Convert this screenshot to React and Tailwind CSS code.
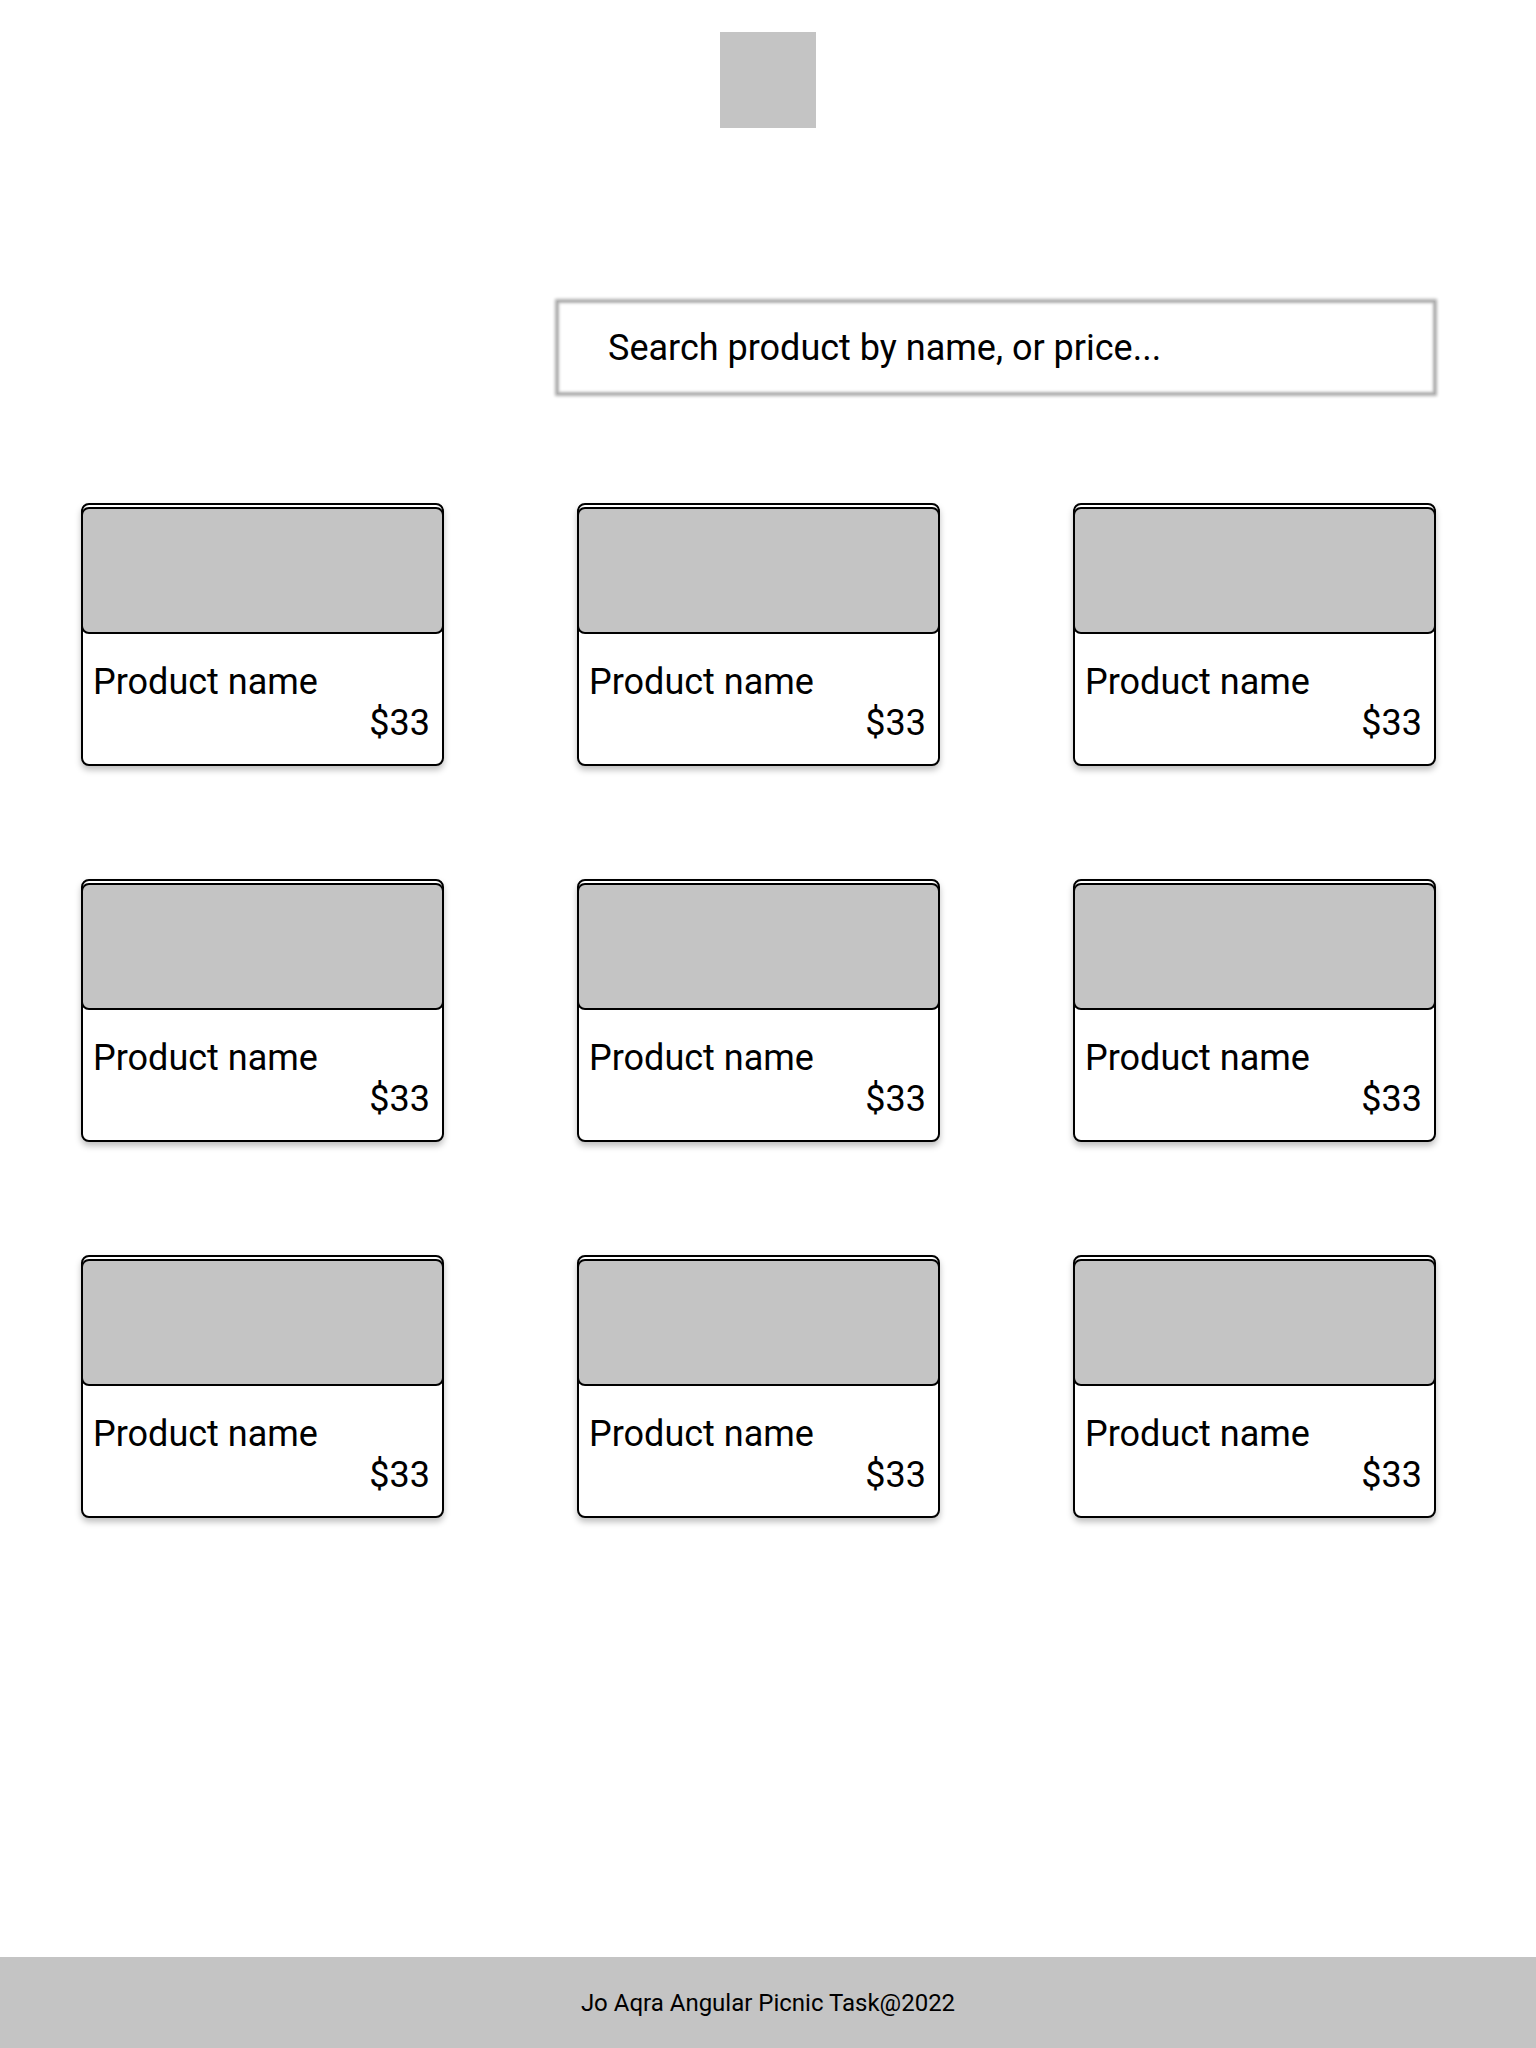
import React from 'react';

const products = Array.from({ length: 9 }, (_, i) => ({ id: i, name: 'Product name', price: 33 }));

const ProductCard = ({ product }) => (
  <div className="h-[263px] w-[363px] rounded-lg border-2 border-black bg-white shadow-[0_4px_6px_rgba(0,0,0,0.25)] overflow-hidden">
    <div className="-mx-[2px] mt-[2px] h-[127px] rounded-lg border-2 border-black bg-[#c4c4c4]" />
    <div className="pl-[10px] pr-[12px] pt-[28px] text-[36px] leading-[41px] text-black">
      <div>{product.name}</div>
      <div className="text-right">${product.price}</div>
    </div>
  </div>
);

const App = () => {
  return (
    <div className="flex min-h-screen flex-col bg-white font-['Roboto',sans-serif]">
      <header className="flex justify-center pt-[32px]">
        <div className="h-[96px] w-[96px] bg-[#c4c4c4]" />
      </header>

      <main className="flex-1">
        <div className="ml-[557px] mt-[173px] w-[878px]">
          <input
            type="text"
            placeholder="Search product by name, or price..."
            className="h-[93px] w-full border-0 bg-white pl-[51px] text-[36px] text-black placeholder:text-black shadow-[0_0_3px_2px_rgba(0,0,0,0.32),inset_0_0_3px_2px_rgba(0,0,0,0.32)] outline-none"
          />
        </div>

        <div className="ml-[81px] mt-[109px] grid w-[1355px] grid-cols-[363px_363px_363px] justify-between gap-y-[113px]">
          {products.map((p) => (
            <ProductCard key={p.id} product={p} />
          ))}
        </div>
      </main>

      <footer className="flex h-[91px] items-center justify-center bg-[#c4c4c4] text-[24px] text-black">
        Jo Aqra Angular Picnic Task@2022
      </footer>
    </div>
  );
};

export default App;
